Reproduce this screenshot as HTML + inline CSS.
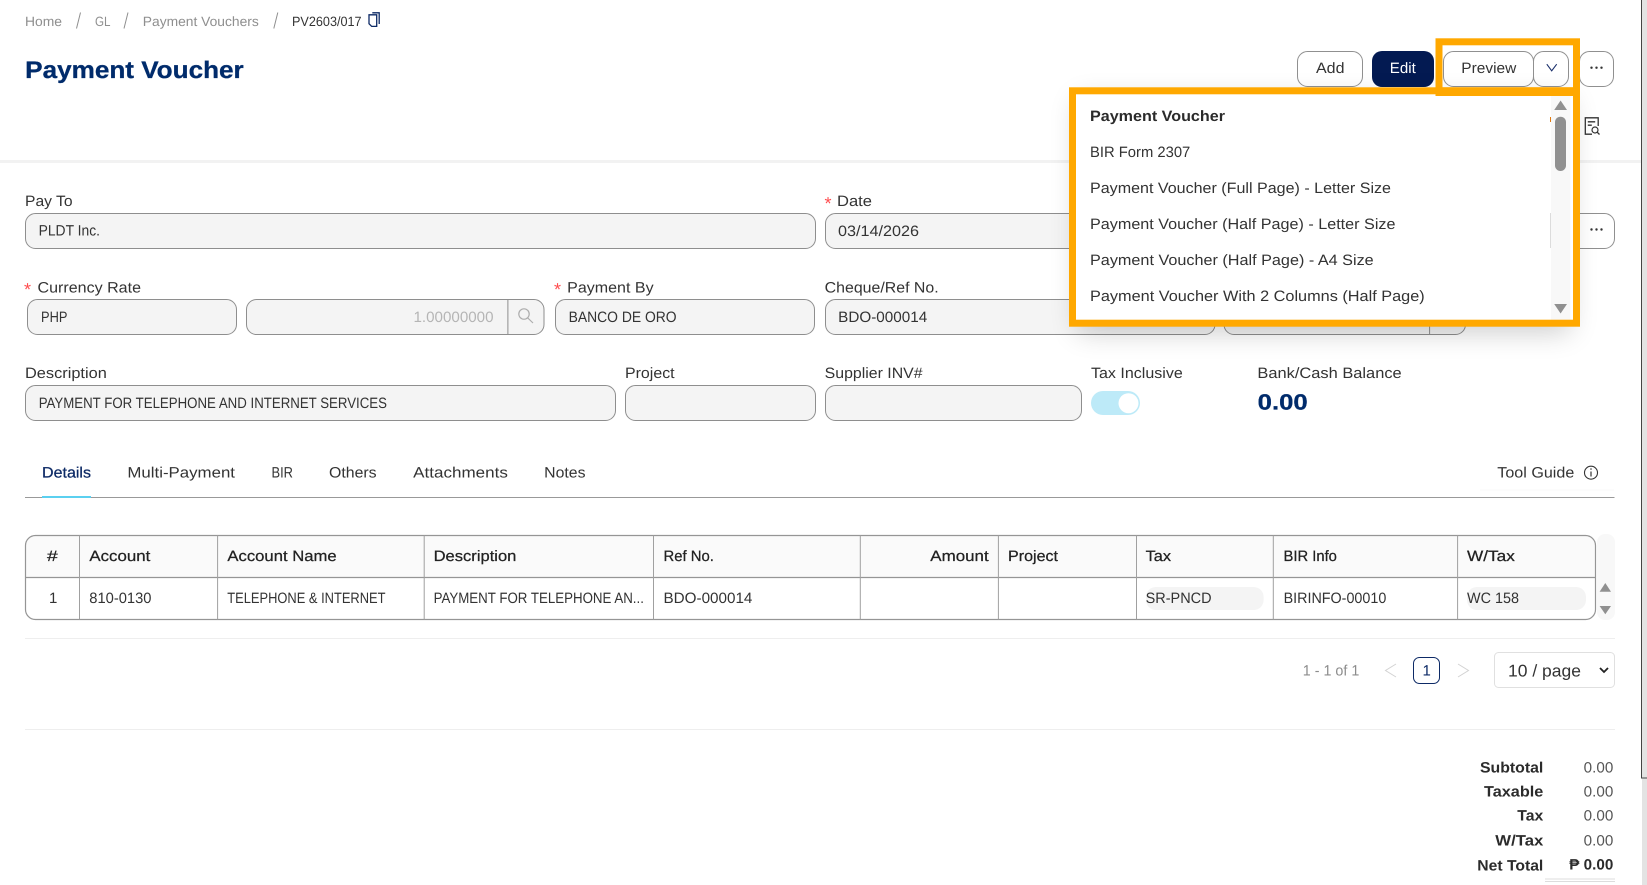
<!DOCTYPE html>
<html lang="en"><head><meta charset="utf-8"><title>Payment Voucher</title>
<style>
html,body{margin:0;padding:0;background:#fff;overflow:hidden;width:1647px;height:885px}
svg{display:block}
text{font-family:"Liberation Sans","DejaVu Sans",sans-serif;font-size:15px;fill:#333;text-rendering:geometricPrecision}
.bc{font-size:13.5px;fill:#8f8f8f}
.m{fill:#222;stroke:#222;stroke-width:.25px}
.b{font-weight:bold;fill:#2b2b2b}
.n{fill:#002b6b;font-weight:bold;stroke:#002b6b;stroke-width:.3px}
.s{fill:#ff4d4f;font-size:18px}
.i{fill:#f4f4f4;stroke:#8e8e8e;stroke-width:1}
.btn{fill:#fff;stroke:#909090;stroke-width:1}
</style></head><body>
<svg width="1647" height="885" viewBox="0 0 1647 885" xmlns="http://www.w3.org/2000/svg">
<defs><filter id="sh" x="-10%" y="-20%" width="120%" height="150%"><feGaussianBlur stdDeviation="14"/></filter></defs>
<rect width="1647" height="885" fill="#fff"/>

<!-- right edge -->
<rect x="1642" y="0" width="5" height="885" fill="#e3e3e3"/>
<path d="M1641.5 0V778H1647" fill="none" stroke="#444" stroke-width="1"/>

<!-- breadcrumb -->
<text class="bc" x="25" y="26" textLength="37" lengthAdjust="spacingAndGlyphs">Home</text>
<path d="M80.5 12.5L76.5 28.5M128 12.5L124 28.5M277.8 12.5L273.8 28.5" stroke="#8f8f8f" stroke-width="1" fill="none"/>
<text class="bc" x="95" y="26" textLength="15.5" lengthAdjust="spacingAndGlyphs">GL</text>
<text class="bc" x="142.8" y="26" textLength="116" lengthAdjust="spacingAndGlyphs">Payment Vouchers</text>
<text class="bc" x="292" y="26" textLength="69.6" lengthAdjust="spacingAndGlyphs" style="fill:#333">PV2603/017</text>
<path d="M372.3 12.8H379.2V24M369 14.8H376.7V26.4H371.7L369 23.7Z" fill="none" stroke="#0d2a66" stroke-width="1.3"/>

<!-- title -->
<text class="n" x="25.2" y="78" textLength="218.5" lengthAdjust="spacingAndGlyphs" style="font-size:24px">Payment Voucher</text>

<!-- buttons -->
<rect class="btn" x="1297.5" y="51.5" width="65" height="35" rx="10"/>
<text x="1316" y="73" textLength="28.5" lengthAdjust="spacingAndGlyphs">Add</text>
<rect x="1372" y="51" width="62" height="36" rx="10" fill="#031a52"/>
<text x="1389.8" y="73" textLength="26" lengthAdjust="spacingAndGlyphs" style="fill:#fff">Edit</text>
<rect class="btn" x="1443.5" y="51.5" width="90" height="35" rx="10"/>
<text x="1461.3" y="73" textLength="55" lengthAdjust="spacingAndGlyphs">Preview</text>
<rect class="btn" x="1533.5" y="51.5" width="35" height="35" rx="10"/>
<path d="M1546.8 64.2L1551.7 70.8L1556.7 64.2" fill="none" stroke="#1a2f6b" stroke-width="1.1"/>
<rect class="btn" x="1579.5" y="51.5" width="34" height="35" rx="10"/>
<circle cx="1591.5" cy="67.7" r="1.2" fill="#333"/><circle cx="1596.5" cy="67.7" r="1.2" fill="#333"/><circle cx="1601.5" cy="67.7" r="1.2" fill="#333"/>

<!-- report icon -->
<path d="M1592 134.2H1585.3V117.8H1598.2V126M1587.8 121.8H1595.2M1587.8 125.2H1591.8" fill="none" stroke="#333" stroke-width="1.3"/>
<circle cx="1595" cy="130" r="3" fill="none" stroke="#333" stroke-width="1.2"/>
<path d="M1597.2 132.2L1599.5 134.5" stroke="#333" stroke-width="1.3"/>

<!-- divider -->
<rect x="0" y="160" width="1641" height="3" fill="#f2f2f2"/>

<!-- row 1 -->
<text x="25" y="206" textLength="47.6" lengthAdjust="spacingAndGlyphs">Pay To</text>
<rect class="i" x="25.5" y="213.5" width="790" height="35" rx="10"/>
<text x="38.6" y="235.3" textLength="61.4" lengthAdjust="spacingAndGlyphs">PLDT Inc.</text>
<text class="s" x="824.5" y="209.5">*</text>
<text x="837" y="206" textLength="35" lengthAdjust="spacingAndGlyphs">Date</text>
<rect class="i" x="825.5" y="213.5" width="740" height="35" rx="10"/>
<text x="838" y="236" textLength="81" lengthAdjust="spacingAndGlyphs">03/14/2026</text>
<rect x="1570" y="213.5" width="44.5" height="35" rx="10" class="btn"/>
<circle cx="1591.5" cy="229.5" r="1.2" fill="#333"/><circle cx="1596.5" cy="229.5" r="1.2" fill="#333"/><circle cx="1601.5" cy="229.5" r="1.2" fill="#333"/>

<!-- row 2 -->
<text class="s" x="24" y="295.5">*</text>
<text x="37.5" y="292.3" textLength="103.5" lengthAdjust="spacingAndGlyphs">Currency Rate</text>
<rect class="i" x="27.5" y="299.5" width="209" height="35" rx="10"/>
<text x="41" y="322" textLength="26.4" lengthAdjust="spacingAndGlyphs">PHP</text>
<rect class="i" x="246.5" y="299.5" width="297.5" height="35" rx="10"/>
<path d="M507.9 299.5V334.5" stroke="#8e8e8e"/>
<text x="413.5" y="322" textLength="80" lengthAdjust="spacingAndGlyphs" style="fill:#b5b5b5">1.00000000</text>
<circle cx="524" cy="314" r="5.2" fill="none" stroke="#adadad" stroke-width="1.2"/>
<path d="M527.8 318L533 323" stroke="#adadad" stroke-width="1.2"/>
<text class="s" x="554" y="295.5">*</text>
<text x="567.2" y="292.3" textLength="86.4" lengthAdjust="spacingAndGlyphs">Payment By</text>
<rect class="i" x="555.5" y="299.5" width="259" height="35" rx="10"/>
<text x="568.6" y="322" textLength="108" lengthAdjust="spacingAndGlyphs">BANCO DE ORO</text>
<text x="824.7" y="292.3" textLength="114" lengthAdjust="spacingAndGlyphs">Cheque/Ref No.</text>
<rect class="i" x="825.5" y="299.5" width="389.5" height="35" rx="10"/>
<text x="838.2" y="322" textLength="89" lengthAdjust="spacingAndGlyphs">BDO-000014</text>
<rect class="i" x="1224" y="299.5" width="241.5" height="35" rx="10"/>
<path d="M1429.6 299.5V334.5" stroke="#8e8e8e"/>

<!-- row 3 -->
<text x="25" y="378.2" textLength="81.8" lengthAdjust="spacingAndGlyphs">Description</text>
<rect class="i" x="25.5" y="385.5" width="590" height="35" rx="10"/>
<text x="38.7" y="408" textLength="348.3" lengthAdjust="spacingAndGlyphs">PAYMENT FOR TELEPHONE AND INTERNET SERVICES</text>
<text x="625" y="378.2" textLength="49.6" lengthAdjust="spacingAndGlyphs">Project</text>
<rect class="i" x="625.5" y="385.5" width="190" height="35" rx="10"/>
<text x="824.7" y="378.2" textLength="97.9" lengthAdjust="spacingAndGlyphs">Supplier INV#</text>
<rect class="i" x="825.5" y="385.5" width="256" height="35" rx="10"/>
<text x="1091" y="378.2" textLength="91.8" lengthAdjust="spacingAndGlyphs">Tax Inclusive</text>
<rect x="1091" y="391" width="49" height="24" rx="12" fill="#bdeaf8"/>
<circle cx="1128.5" cy="403.2" r="10" fill="#fff"/>
<text x="1257.4" y="378.2" textLength="144.3" lengthAdjust="spacingAndGlyphs">Bank/Cash Balance</text>
<text class="n" x="1257.7" y="409.3" textLength="50" lengthAdjust="spacingAndGlyphs" style="font-size:22px">0.00</text>

<!-- tabs -->
<text x="42" y="477.3" textLength="49" lengthAdjust="spacingAndGlyphs" style="fill:#0d2a66;stroke:#0d2a66;stroke-width:.25px">Details</text>
<text x="127.4" y="477.3" textLength="107.6" lengthAdjust="spacingAndGlyphs">Multi-Payment</text>
<text x="271.5" y="477.3" textLength="21.5" lengthAdjust="spacingAndGlyphs">BIR</text>
<text x="329" y="477.3" textLength="47.6" lengthAdjust="spacingAndGlyphs">Others</text>
<text x="413.2" y="477.3" textLength="94.7" lengthAdjust="spacingAndGlyphs">Attachments</text>
<text x="544.2" y="477.3" textLength="41.3" lengthAdjust="spacingAndGlyphs">Notes</text>
<rect x="1480" y="489.5" width="134" height="1.2" fill="#fafafa"/>
<text x="1497.3" y="477.7" textLength="77" lengthAdjust="spacingAndGlyphs">Tool Guide</text>
<circle cx="1591" cy="472.7" r="6.5" fill="none" stroke="#333" stroke-width="1.1"/>
<path d="M1591 471.5V476.5" stroke="#333" stroke-width="1.2"/><circle cx="1591" cy="469" r=".8" fill="#333"/>
<path d="M25 497.5H1614.5" stroke="#999"/>
<rect x="42" y="496" width="49" height="2" fill="#5bd0f0"/>

<!-- table -->
<rect x="1597" y="534" width="18" height="86" rx="8" fill="#f8f8f8"/>
<rect x="25.5" y="535.5" width="1570" height="84" rx="10" fill="#fff"/>
<path d="M35.5 535.5H1585.5A10 10 0 0 1 1595.5 545.5V577.5H25.5V545.5A10 10 0 0 1 35.5 535.5Z" fill="#fafafa"/>
<rect x="25.5" y="535.5" width="1570" height="84" rx="10" fill="none" stroke="#959595" stroke-width="1.2"/>
<path d="M25.5 577.5H1595.5" stroke="#959595" stroke-width="1.2"/>
<path d="M79.5 535.5V619.5M217.6 535.5V619.5M424.2 535.5V619.5M653.5 535.5V619.5M860.3 535.5V619.5M998.4 535.5V619.5M1136.5 535.5V619.5M1273.3 535.5V619.5M1457.6 535.5V619.5" stroke="#a0a0a0" stroke-width="1" fill="none"/>
<text class="m" x="47" y="561" textLength="10.7" lengthAdjust="spacingAndGlyphs">#</text>
<text class="m" x="89.4" y="561" textLength="60.9" lengthAdjust="spacingAndGlyphs">Account</text>
<text class="m" x="227.4" y="561" textLength="109.3" lengthAdjust="spacingAndGlyphs">Account Name</text>
<text class="m" x="433.6" y="561" textLength="82.8" lengthAdjust="spacingAndGlyphs">Description</text>
<text class="m" x="663.5" y="561" textLength="50.4" lengthAdjust="spacingAndGlyphs">Ref No.</text>
<text class="m" x="930.3" y="561" textLength="58.4" lengthAdjust="spacingAndGlyphs">Amount</text>
<text class="m" x="1008" y="561" textLength="50" lengthAdjust="spacingAndGlyphs">Project</text>
<text class="m" x="1145.6" y="561" textLength="25.4" lengthAdjust="spacingAndGlyphs">Tax</text>
<text class="m" x="1283.5" y="561" textLength="53.4" lengthAdjust="spacingAndGlyphs">BIR Info</text>
<text class="m" x="1467" y="561" textLength="47.8" lengthAdjust="spacingAndGlyphs">W/Tax</text>
<rect x="1146" y="587" width="117.6" height="23" rx="10" fill="#f4f4f4"/>
<rect x="1467" y="587" width="119" height="23" rx="10" fill="#f4f4f4"/>
<text x="49" y="603" style="font-size:15px">1</text>
<text x="89.3" y="603" textLength="62.2" lengthAdjust="spacingAndGlyphs">810-0130</text>
<text x="227.3" y="603" textLength="158.2" lengthAdjust="spacingAndGlyphs">TELEPHONE &amp; INTERNET</text>
<text x="433.6" y="603" textLength="210.3" lengthAdjust="spacingAndGlyphs">PAYMENT FOR TELEPHONE AN...</text>
<text x="663.5" y="603" textLength="88.9" lengthAdjust="spacingAndGlyphs">BDO-000014</text>
<text x="1145.6" y="603" textLength="66" lengthAdjust="spacingAndGlyphs">SR-PNCD</text>
<text x="1283.6" y="603" textLength="102.7" lengthAdjust="spacingAndGlyphs">BIRINFO-00010</text>
<text x="1467" y="603" textLength="52" lengthAdjust="spacingAndGlyphs">WC 158</text>
<path d="M1605.3 583L1611 591.7H1599.6ZM1605.3 614.3L1611 606H1599.6Z" fill="#909090"/>
<path d="M25 638.5H1615" stroke="#eee"/>

<!-- pagination -->
<text x="1302.8" y="675.4" textLength="56.5" lengthAdjust="spacingAndGlyphs" style="fill:#8c8c8c">1 - 1 of 1</text>
<path d="M1396 664L1385.5 670.5L1396 677M1458 664L1468.5 670.5L1458 677" fill="none" stroke="#d2d2d2" stroke-width="1"/>
<rect x="1413.5" y="657.5" width="26" height="26" rx="6" fill="#fff" stroke="#0d2a66" stroke-width="1"/>
<text x="1422.5" y="675.7" style="fill:#0d2a66">1</text>
<rect x="1494.5" y="652.5" width="120" height="35" rx="4" fill="#fff" stroke="#e0e0e0"/>
<text x="1508" y="676.5" textLength="73" lengthAdjust="spacingAndGlyphs" style="font-size:17px">10 / page</text>
<path d="M1600 668L1604 672L1608 668" fill="none" stroke="#222" stroke-width="1.8"/>

<path d="M25 729.5H1615" stroke="#eee"/>

<!-- totals -->
<text class="b" x="1480" y="772.6" textLength="63.3" lengthAdjust="spacingAndGlyphs">Subtotal</text>
<text class="b" x="1484" y="796.6" textLength="59.3" lengthAdjust="spacingAndGlyphs">Taxable</text>
<text class="b" x="1517.3" y="820.6" textLength="26" lengthAdjust="spacingAndGlyphs">Tax</text>
<text class="b" x="1495.3" y="845.4" textLength="48" lengthAdjust="spacingAndGlyphs">W/Tax</text>
<text class="b" x="1477.3" y="870.4" textLength="66" lengthAdjust="spacingAndGlyphs">Net Total</text>
<text x="1583.7" y="772.6" textLength="29.6" lengthAdjust="spacingAndGlyphs" style="fill:#555">0.00</text>
<text x="1583.7" y="796.6" textLength="29.6" lengthAdjust="spacingAndGlyphs" style="fill:#555">0.00</text>
<text x="1583.7" y="820.6" textLength="29.6" lengthAdjust="spacingAndGlyphs" style="fill:#555">0.00</text>
<text x="1583.7" y="845.4" textLength="29.6" lengthAdjust="spacingAndGlyphs" style="fill:#555">0.00</text>
<text class="b" x="1569.3" y="869.6" textLength="44" lengthAdjust="spacingAndGlyphs">₱ 0.00</text>
<path d="M1545 879H1615M1545 881.5H1615" stroke="#ddd"/>

<!-- dropdown -->
<rect x="1078" y="100" width="492" height="232" fill="#000" opacity=".2" filter="url(#sh)"/>
<rect x="1075.7" y="93" width="498" height="228" fill="#fff"/>
<rect x="1551" y="96" width="19.5" height="224" fill="#f8f8f8"/>
<path d="M1550.5 213V248" stroke="#dcdcdc"/>
<rect x="1550" y="117" width="1" height="5" fill="#e07a10"/>
<text class="b" x="1090" y="121" textLength="135" lengthAdjust="spacingAndGlyphs">Payment Voucher</text>
<text x="1090" y="157" textLength="100.3" lengthAdjust="spacingAndGlyphs">BIR Form 2307</text>
<text x="1090" y="193.2" textLength="301" lengthAdjust="spacingAndGlyphs">Payment Voucher (Full Page) - Letter Size</text>
<text x="1090" y="229.2" textLength="305.5" lengthAdjust="spacingAndGlyphs">Payment Voucher (Half Page) - Letter Size</text>
<text x="1090" y="265.2" textLength="283.7" lengthAdjust="spacingAndGlyphs">Payment Voucher (Half Page) - A4 Size</text>
<text x="1090" y="301.2" textLength="334.7" lengthAdjust="spacingAndGlyphs">Payment Voucher With 2 Columns (Half Page)</text>
<path d="M1560.6 100.5L1567 110H1554.2ZM1560.6 313.5L1567 304H1554.2Z" fill="#909090"/>
<rect x="1555" y="116.7" width="11" height="54.3" rx="5.5" fill="#909090"/>

<!-- highlight boxes -->
<rect x="1072.5" y="90.8" width="504" height="232.4" fill="none" stroke="#ffa800" stroke-width="7"/>
<rect x="1439" y="41.8" width="137.5" height="50.7" fill="none" stroke="#ffa800" stroke-width="7"/>
<rect x="1439" y="87.3" width="137.5" height="8.7" fill="#ffa800"/>
</svg>
</body></html>
